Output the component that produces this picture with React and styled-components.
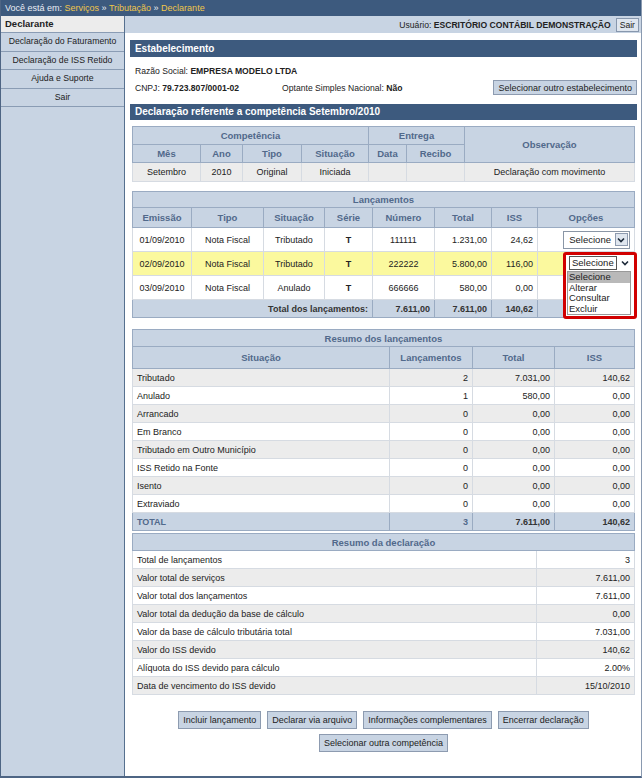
import styled, { createGlobalStyle } from "styled-components";

const GlobalStyle = createGlobalStyle`
  body {
    margin: 0;
    font-family: "Liberation Sans", Arial, sans-serif;
    color: #222;
    background: #fff;
  }
`;

const Frame = styled.div`
  width: 642px;
  height: 778px;
  box-sizing: border-box;
  display: flex;
  flex-direction: column;
  border-left: 1px solid #4e6584;
  border-right: 1px solid #8a9ab0;
  border-bottom: 2px solid #4e6584;
`;

const TopBar = styled.div`
  height: 16px;
  line-height: 16px;
  background: #3d5a7e;
  color: #e9eef5;
  font-size: 9px;
  padding-left: 4px;
  a {
    color: #efc64a;
    text-decoration: none;
  }
`;

const Body = styled.div`
  flex: 1;
  display: flex;
`;

const Sidebar = styled.div`
  width: 124px;
  background: #c8d4e3;
  border-right: 1px solid #56708f;
`;

const SideHead = styled.div`
  height: 16px;
  line-height: 16px;
  background: #ececec;
  font-weight: bold;
  font-size: 9.5px;
  padding-left: 4px;
  border-bottom: 1px solid #8a9cb4;
`;

const SideItem = styled.div`
  height: 17.5px;
  line-height: 17.5px;
  text-align: center;
  font-size: 8.7px;
  border-bottom: 1px solid #8a9cb4;
`;

const Main = styled.div`
  flex: 1;
  display: flex;
  flex-direction: column;
`;

const UserBar = styled.div`
  height: 17px;
  background: #c8d4e3;
  display: flex;
  justify-content: flex-end;
  align-items: center;
  gap: 5px;
  padding-right: 2px;
  font-size: 8.6px;
  b {
    font-weight: bold;
  }
`;

const SmallButton = styled.button`
  font-family: inherit;
  font-size: 8.6px;
  background: #dfe6ef;
  border: 1px solid #8797ad;
  padding: 0 3px;
  height: 14px;
  line-height: 12px;
  color: #222;
`;

const Content = styled.div`
  padding: 7px 4px 0 5px;
  display: flex;
  flex-direction: column;
`;

const SectionHead = styled.div`
  background: #3d5a7e;
  color: #fff;
  font-weight: bold;
  font-size: 10px;
  height: ${(p) => p.$h || 17}px;
  line-height: ${(p) => p.$h || 17}px;
  padding-left: 5px;
  margin-top: ${(p) => p.$mt || 0}px;
`;

const InfoLine = styled.div`
  display: flex;
  align-items: center;
  font-size: 8.6px;
  padding-left: 5px;
  height: ${(p) => p.$h}px;
  margin-top: ${(p) => p.$mt || 0}px;
  b {
    font-weight: bold;
  }
`;

const Spacer = styled.span`
  width: ${(p) => p.$w}px;
`;

const Button = styled.button`
  font-family: inherit;
  font-size: 9px;
  color: #222;
  background: #c8d4e3;
  border: 1px solid #8d9bb0;
  padding: 0 4px;
  height: ${(p) => p.$h || 18}px;
  margin-left: ${(p) => (p.$push ? "auto" : "0")};
`;

const Table = styled.table`
  width: 502px;
  margin: ${(p) => p.$mt || 0}px 2px 0 2px;
  border-collapse: collapse;
  table-layout: fixed;
  font-size: 9px;
  position: relative;
`;

const Th = styled.th`
  background: #c8d4e3;
  color: #51698b;
  font-weight: bold;
  font-size: ${(p) => p.$fs || 9.5}px;
  border: 1px solid #9aabc2;
  height: ${(p) => p.$h || 17}px;
  padding: 0 4px;
  text-align: ${(p) => p.$align || "center"};
`;

const Td = styled.td`
  border: 1px solid #d6dbe2;
  background: ${(p) => p.$bg || "#fff"};
  height: ${(p) => p.$h || 17}px;
  padding: 0 4px;
  text-align: ${(p) => p.$align || "center"};
  font-weight: ${(p) => (p.$bold ? "bold" : "normal")};
  color: ${(p) => p.$color || "#222"};
  position: relative;
  white-space: nowrap;
`;

const TotalTd = styled(Td)`
  background: #c8d4e3;
  border-color: #9aabc2;
  font-weight: bold;
  color: ${(p) => p.$color || "#333"};
`;

const SelectBox = styled.div`
  display: inline-flex;
  align-items: center;
  gap: 4px;
  background: #fff;
  border: 1px solid #8a96a6;
  padding: 1px 1px 1px 5px;
  font-size: 9.5px;
  height: 14px;
`;

const ArrowBox = styled.span`
  width: 11px;
  height: 11px;
  border: 1px solid #8e9bb0;
  background: #dfe6ef;
  display: flex;
  align-items: center;
  justify-content: center;
`;

const Popup = styled.div`
  position: absolute;
  left: 25px;
  top: 0;
  width: 74px;
  height: 67px;
  box-sizing: border-box;
  border: 3px solid #d10000;
  border-radius: 3px;
  background: #fff;
  padding: 1px 3px 0 1px;
  z-index: 2;
  text-align: left;
`;

const PopupHead = styled.div`
  display: flex;
  align-items: center;
  gap: 4px;
  padding-left: 2px;
  height: 14px;
`;

const FocusBox = styled.span`
  border: 1px solid #555;
  font-size: 9.5px;
  padding: 0 2px;
  line-height: 12px;
  background: #fff;
`;

const OptionList = styled.div`
  margin-top: 1px;
  border: 1px solid #999;
  background: #fff;
`;

const Option = styled.div`
  font-size: 9.5px;
  line-height: 10.5px;
  padding-left: 1px;
  background: ${(p) => (p.$active ? "#b9b9b9" : "#fff")};
`;

const ButtonRow = styled.div`
  display: flex;
  justify-content: center;
  gap: 6px;
  margin-top: ${(p) => p.$mt || 0}px;
`;

const Chevron = () => (
  <svg width="8" height="6" viewBox="0 0 8 6">
    <polyline points="1,1.5 4,4.5 7,1.5" fill="none" stroke="#1d2a3a" strokeWidth="1.6" />
  </svg>
);

const lancamentos = [
  { em: "01/09/2010", sit: "Tributado", num: "111111", total: "1.231,00", iss: "24,62", bg: "#fff" },
  { em: "02/09/2010", sit: "Tributado", num: "222222", total: "5.800,00", iss: "116,00", bg: "#fbf99e", open: true },
  { em: "03/09/2010", sit: "Anulado", num: "666666", total: "580,00", iss: "0,00", bg: "#fff", noSelect: true },
];

const resumo = [
  ["Tributado", "2", "7.031,00", "140,62"],
  ["Anulado", "1", "580,00", "0,00"],
  ["Arrancado", "0", "0,00", "0,00"],
  ["Em Branco", "0", "0,00", "0,00"],
  ["Tributado em Outro Município", "0", "0,00", "0,00"],
  ["ISS Retido na Fonte", "0", "0,00", "0,00"],
  ["Isento", "0", "0,00", "0,00"],
  ["Extraviado", "0", "0,00", "0,00"],
];

const declaracao = [
  ["Total de lançamentos", "3"],
  ["Valor total de serviços", "7.611,00"],
  ["Valor total dos lançamentos", "7.611,00"],
  ["Valor total da dedução da base de cálculo", "0,00"],
  ["Valor da base de cálculo tributária total", "7.031,00"],
  ["Valor do ISS devido", "140,62"],
  ["Alíquota do ISS devido para cálculo", "2.00%"],
  ["Data de vencimento do ISS devido", "15/10/2010"],
];

const GRAY = "#ececec";

export default function App() {
  return (
    <>
      <GlobalStyle />
      <Frame>
        <TopBar>
          Você está em: <a>Serviços</a> » <a>Tributação</a> » <a>Declarante</a>
        </TopBar>
        <Body>
          <Sidebar>
            <SideHead>Declarante</SideHead>
            <SideItem>Declaração do Faturamento</SideItem>
            <SideItem>Declaração de ISS Retido</SideItem>
            <SideItem>Ajuda e Suporte</SideItem>
            <SideItem>Sair</SideItem>
          </Sidebar>
          <Main>
            <UserBar>
              <span>
                Usuário: <b>ESCRITÓRIO CONTÁBIL DEMONSTRAÇÃO</b>
              </span>
              <SmallButton>Sair</SmallButton>
            </UserBar>
            <Content>
              <SectionHead>Estabelecimento</SectionHead>
              <InfoLine $h={17} $mt={5}>
                Razão Social:&nbsp;<b>EMPRESA MODELO LTDA</b>
              </InfoLine>
              <InfoLine $h={17}>
                CNPJ:&nbsp;<b>79.723.807/0001-02</b>
                <Spacer $w={43} />
                Optante Simples Nacional:&nbsp;<b>Não</b>
                <Button $push $h={15}>Selecionar outro estabelecimento</Button>
              </InfoLine>
              <SectionHead $mt={8} $h={16}>
                Declaração referente a competência Setembro/2010
              </SectionHead>

              <Table $mt={6}>
                <colgroup>
                  <col style={{ width: 68 }} />
                  <col style={{ width: 42 }} />
                  <col style={{ width: 59 }} />
                  <col style={{ width: 67 }} />
                  <col style={{ width: 38 }} />
                  <col style={{ width: 58 }} />
                  <col style={{ width: 170 }} />
                </colgroup>
                <thead>
                  <tr>
                    <Th colSpan={4}>Competência</Th>
                    <Th colSpan={2}>Entrega</Th>
                    <Th rowSpan={2}>Observação</Th>
                  </tr>
                  <tr>
                    <Th>Mês</Th>
                    <Th>Ano</Th>
                    <Th>Tipo</Th>
                    <Th>Situação</Th>
                    <Th>Data</Th>
                    <Th>Recibo</Th>
                  </tr>
                </thead>
                <tbody>
                  <tr>
                    <Td $bg={GRAY} $h={18}>Setembro</Td>
                    <Td $bg={GRAY}>2010</Td>
                    <Td $bg={GRAY}>Original</Td>
                    <Td $bg={GRAY}>Iniciada</Td>
                    <Td $bg={GRAY}></Td>
                    <Td $bg={GRAY}></Td>
                    <Td $bg={GRAY}>Declaração com movimento</Td>
                  </tr>
                </tbody>
              </Table>

              <Table $mt={9}>
                <colgroup>
                  <col style={{ width: 59 }} />
                  <col style={{ width: 72 }} />
                  <col style={{ width: 61 }} />
                  <col style={{ width: 48 }} />
                  <col style={{ width: 62 }} />
                  <col style={{ width: 57 }} />
                  <col style={{ width: 46 }} />
                  <col style={{ width: 97 }} />
                </colgroup>
                <thead>
                  <tr>
                    <Th colSpan={8} $h={15}>Lançamentos</Th>
                  </tr>
                  <tr>
                    <Th $h={19}>Emissão</Th>
                    <Th>Tipo</Th>
                    <Th>Situação</Th>
                    <Th>Série</Th>
                    <Th>Número</Th>
                    <Th>Total</Th>
                    <Th>ISS</Th>
                    <Th>Opções</Th>
                  </tr>
                </thead>
                <tbody>
                  {lancamentos.map((l) => (
                    <tr key={l.em}>
                      <Td $bg={l.bg} $h={23}>{l.em}</Td>
                      <Td $bg={l.bg}>Nota Fiscal</Td>
                      <Td $bg={l.bg}>{l.sit}</Td>
                      <Td $bg={l.bg} $bold>T</Td>
                      <Td $bg={l.bg}>{l.num}</Td>
                      <Td $bg={l.bg} $align="right">{l.total}</Td>
                      <Td $bg={l.bg} $align="right">{l.iss}</Td>
                      <Td $bg={l.bg} $align="right">
                        {!l.noSelect && !l.open && (
                          <SelectBox>
                            Selecione
                            <ArrowBox>
                              <Chevron />
                            </ArrowBox>
                          </SelectBox>
                        )}
                        {l.open && (
                          <Popup>
                            <PopupHead>
                              <FocusBox>Selecione</FocusBox>
                              <Chevron />
                            </PopupHead>
                            <OptionList>
                              <Option $active>Selecione</Option>
                              <Option>Alterar</Option>
                              <Option>Consultar</Option>
                              <Option>Excluir</Option>
                            </OptionList>
                          </Popup>
                        )}
                      </Td>
                    </tr>
                  ))}
                  <tr>
                    <TotalTd colSpan={4} $align="right" $h={17}>
                      Total dos lançamentos:
                    </TotalTd>
                    <TotalTd $align="right">7.611,00</TotalTd>
                    <TotalTd $align="right">7.611,00</TotalTd>
                    <TotalTd $align="right">140,62</TotalTd>
                    <TotalTd></TotalTd>
                  </tr>
                </tbody>
              </Table>

              <Table $mt={11}>
                <colgroup>
                  <col style={{ width: 257 }} />
                  <col style={{ width: 83 }} />
                  <col style={{ width: 82 }} />
                  <col style={{ width: 80 }} />
                </colgroup>
                <thead>
                  <tr>
                    <Th colSpan={4} $h={16}>Resumo dos lançamentos</Th>
                  </tr>
                  <tr>
                    <Th $h={21}>Situação</Th>
                    <Th>Lançamentos</Th>
                    <Th>Total</Th>
                    <Th>ISS</Th>
                  </tr>
                </thead>
                <tbody>
                  {resumo.map((r, i) => {
                    const bg = i % 2 === 0 ? GRAY : "#fff";
                    return (
                      <tr key={r[0]}>
                        <Td $bg={bg} $align="left" $h={17}>{r[0]}</Td>
                        <Td $bg={bg} $align="right">{r[1]}</Td>
                        <Td $bg={bg} $align="right">{r[2]}</Td>
                        <Td $bg={bg} $align="right">{r[3]}</Td>
                      </tr>
                    );
                  })}
                  <tr>
                    <TotalTd $align="left" $color="#51698b" $h={16}>TOTAL</TotalTd>
                    <TotalTd $align="right" $color="#51698b">3</TotalTd>
                    <TotalTd $align="right">7.611,00</TotalTd>
                    <TotalTd $align="right">140,62</TotalTd>
                  </tr>
                </tbody>
              </Table>

              <Table $mt={2}>
                <colgroup>
                  <col style={{ width: 404 }} />
                  <col style={{ width: 98 }} />
                </colgroup>
                <thead>
                  <tr>
                    <Th colSpan={2} $h={16}>Resumo da declaração</Th>
                  </tr>
                </thead>
                <tbody>
                  {declaracao.map((r, i) => {
                    const bg = i % 2 === 1 ? GRAY : "#fff";
                    return (
                      <tr key={r[0]}>
                        <Td $bg={bg} $align="left" $h={17}>{r[0]}</Td>
                        <Td $bg={bg} $align="right">{r[1]}</Td>
                      </tr>
                    );
                  })}
                </tbody>
              </Table>

              <ButtonRow $mt={16}>
                <Button>Incluir lançamento</Button>
                <Button>Declarar via arquivo</Button>
                <Button>Informações complementares</Button>
                <Button>Encerrar declaração</Button>
              </ButtonRow>
              <ButtonRow $mt={5}>
                <Button>Selecionar outra competência</Button>
              </ButtonRow>
            </Content>
          </Main>
        </Body>
      </Frame>
    </>
  );
}
